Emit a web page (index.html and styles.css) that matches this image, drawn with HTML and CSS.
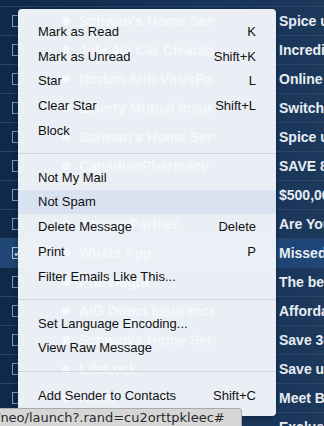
FILE: index.html
```html
<!DOCTYPE html>
<html lang="en">
<head>
    <meta charset="UTF-8">
    <meta name="viewport" content="width=device-width, initial-scale=1.0">
    <title>Inbox</title>
    <link rel="stylesheet" href="styles.css">
</head>
<body>
<div class="list">
    <div class="row"></div>
    <div class="row"><span class="cb"></span><span class="dot"></span><span class="from">Schwan's Home Servi</span><span class="subj">Spice up your summer</span></div>
    <div class="row"><span class="cb"></span><span class="dot"></span><span class="from">July 4th Car Clearance</span><span class="subj">Incredible deals</span></div>
    <div class="row"><span class="cb"></span><span class="dot"></span><span class="from">Norton Anti-VirusParti</span><span class="subj">Online protection</span></div>
    <div class="row"><span class="cb"></span><span class="dot"></span><span class="from">Liberty Mutual Insurance</span><span class="subj">Switch and save</span></div>
    <div class="row"><span class="cb"></span><span class="dot"></span><span class="from">Schwan's Home Servi</span><span class="subj">Spice up your summer</span></div>
    <div class="row"><span class="cb"></span><span class="dot"></span><span class="from">CanadianPharmacy</span><span class="subj">SAVE 80%</span></div>
    <div class="row"><span class="cb"></span><span class="dot"></span><span class="from">LendingTree</span><span class="subj">$500,000</span></div>
    <div class="row"><span class="cb"></span><span class="dot"></span><span class="from">AgencyPartner</span><span class="subj">Are You</span></div>
    <div class="row selected"><span class="cb checked">&#10003;</span><span class="dot"></span><span class="from">Whats App</span><span class="subj">Missed call</span></div>
    <div class="row"><span class="cb"></span><span class="dot"></span><span class="from">Pro.Viagra</span><span class="subj">The best</span></div>
    <div class="row"><span class="cb"></span><span class="dot"></span><span class="from">AIG Direct Insurance</span><span class="subj">Affordable</span></div>
    <div class="row"><span class="cb"></span><span class="dot"></span><span class="from">Schwan's Home Servi</span><span class="subj">Save 30%</span></div>
    <div class="row"><span class="cb"></span><span class="dot"></span><span class="from">LifeLock</span><span class="subj">Save up to</span></div>
    <div class="row"><span class="cb"></span><span class="dot"></span><span class="from">Anna</span><span class="subj">Meet Beautiful</span></div>
    <div class="row"><span class="cb"></span><span class="dot"></span><span class="from">Newsletter</span><span class="subj">Exclusive</span></div>
</div>

<div class="menu">
    <div class="item"><span>Mark as Read</span><span>K</span></div>
    <div class="item"><span>Mark as Unread</span><span>Shift+K</span></div>
    <div class="item"><span>Star</span><span>L</span></div>
    <div class="item"><span>Clear Star</span><span>Shift+L</span></div>
    <div class="item"><span>Block</span></div>
    <div class="sep"></div>
    <div class="item"><span>Not My Mail</span></div>
    <div class="item hover"><span>Not Spam</span></div>
    <div class="item"><span>Delete Message</span><span>Delete</span></div>
    <div class="item"><span>Print</span><span>P</span></div>
    <div class="item"><span>Filter Emails Like This...</span></div>
    <div class="sep"></div>
    <div class="item"><span>Set Language Encoding...</span></div>
    <div class="item"><span>View Raw Message</span></div>
    <div class="sep"></div>
    <div class="item"><span>Add Sender to Contacts</span><span>Shift+C</span></div>
</div>

<div class="status"><span>/neo/launch?.rand=cu2orttpkleec#</span></div>
</body>
</html>
```

FILE: styles.css
```css
body {
    margin: 0;
    width: 324px;
    height: 426px;
    overflow: hidden;
    background: linear-gradient(to right, #10294a, #17345a 60%, #1c395c);
    font-family: "Liberation Sans", Arial, sans-serif;
}
.list {
    margin-top: -22px;
}
.row {
    display: flex;
    align-items: center;
    height: 28px;
    border-bottom: 1px solid #2a4769;
    white-space: nowrap;
}
.row.selected {
    background-color: #1f4677;
}
.cb {
    margin-left: 12px;
    width: 10px;
    height: 10px;
    border: 1px solid #8595aa;
    flex: none;
    font-size: 12px;
    line-height: 10px;
    color: #fff;
    text-align: center;
}
.cb.checked {
    border-color: #b8c6d8;
}
.dot {
    margin-left: 38px;
    width: 8px;
    height: 8px;
    border-radius: 50%;
    background-color: #fff;
    flex: none;
}
.from {
    margin-left: 9px;
    width: 135px;
    overflow: hidden;
    flex: none;
    color: #fff;
    font-weight: bold;
    font-size: 14px;
}
.subj {
    margin-left: 65px;
    color: #e8edf3;
    font-weight: bold;
    font-size: 14px;
}
.menu {
    position: absolute;
    left: 18px;
    top: 9px;
    width: 258px;
    height: 407px;
    box-sizing: border-box;
    padding: 10px 0 9px;
    background-color: rgba(244, 247, 252, 0.96);
    border-radius: 4px;
    box-shadow: 0 1px 6px rgba(0, 0, 0, 0.35);
    font-size: 13px;
    color: #111;
}
.item {
    display: flex;
    justify-content: space-between;
    align-items: center;
    height: 24.7px;
    padding: 0 20px;
}
.item.hover {
    background-color: #d9e2f0;
}
.sep {
    height: 22.5px;
    position: relative;
}
.sep::after {
    content: "";
    position: absolute;
    left: 0;
    right: 0;
    top: 11px;
    border-top: 1px solid #d0d5dd;
}
.status {
    position: absolute;
    left: 0;
    bottom: 0;
    width: 241px;
    height: 17px;
    overflow: hidden;
    background-color: #d6d6d6;
    border-top: 1px solid #a9a9a9;
    border-right: 1px solid #a9a9a9;
    border-top-right-radius: 4px;
    font-family: "DejaVu Sans", sans-serif;
    font-size: 13px;
    line-height: 17px;
    color: #2a2a2a;
    white-space: nowrap;
}
.status span {
    margin-left: -4px;
}
```
